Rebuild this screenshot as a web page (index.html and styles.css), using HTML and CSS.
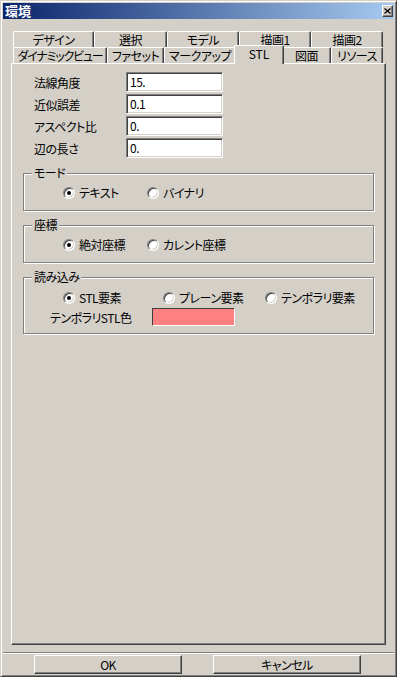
FILE: index.html
```html
<!DOCTYPE html>
<html lang="ja">
<head>
  <meta charset="UTF-8">
  <title>環境</title>
  <link rel="stylesheet" href="styles.css">
</head>
<body>
  <div class="window">
    <div class="titlebar">
      <span class="title">環境</span>
      <span class="close-btn">
        <svg width="7" height="6" viewBox="0 0 7 6"><path d="M0.5 0.5 L6.5 5.5 M6.5 0.5 L0.5 5.5" stroke="#000" stroke-width="1.3" fill="none"/></svg>
      </span>
    </div>

    <div class="dialog-body">
      <div class="tabs">
        <div class="tab-row">
          <div class="tab t-design">デザイン</div>
          <div class="tab t-select">選択</div>
          <div class="tab t-model">モデル</div>
          <div class="tab t-draw1">描画1</div>
          <div class="tab t-draw2">描画2</div>
        </div>
        <div class="tab-row">
          <div class="tab t-dynamic">ダイナミックビュー</div>
          <div class="tab t-facet">ファセット</div>
          <div class="tab t-markup">マークアップ</div>
          <div class="tab t-stl selected">STL</div>
          <div class="tab t-drawing">図面</div>
          <div class="tab t-resource">リソース</div>
        </div>
      </div>

      <div class="panel">
        <div class="fields">
          <label class="field-label">法線角度</label>
          <div class="field-input">15.</div>
          <label class="field-label">近似誤差</label>
          <div class="field-input">0.1</div>
          <label class="field-label">アスペクト比</label>
          <div class="field-input">0.</div>
          <label class="field-label">辺の長さ</label>
          <div class="field-input">0.</div>
        </div>

        <fieldset class="group group-mode">
          <legend>モード</legend>
          <div class="radio-row">
            <div class="radio r-short"><span class="radio-dot checked"></span>テキスト</div>
            <div class="radio"><span class="radio-dot"></span>バイナリ</div>
          </div>
        </fieldset>

        <fieldset class="group">
          <legend>座標</legend>
          <div class="radio-row">
            <div class="radio r-short"><span class="radio-dot checked"></span>絶対座標</div>
            <div class="radio"><span class="radio-dot"></span>カレント座標</div>
          </div>
        </fieldset>

        <fieldset class="group group-read">
          <legend>読み込み</legend>
          <div class="radio-row">
            <div class="radio r-wide"><span class="radio-dot checked"></span>STL要素</div>
            <div class="radio r-wider"><span class="radio-dot"></span>プレーン要素</div>
            <div class="radio"><span class="radio-dot"></span>テンポラリ要素</div>
          </div>
          <div class="color-row">
            <span class="color-label">テンポラリSTL色</span>
            <span class="color-box"></span>
          </div>
        </fieldset>
      </div>
    </div>

    <div class="separator"></div>

    <div class="buttons">
      <div class="btn">OK</div>
      <div class="btn">キャンセル</div>
    </div>
  </div>
</body>
</html>
```

FILE: styles.css
```css
body {
  margin: 0;
  background-color: #d4d0c8;
  font-family: "Noto Sans CJK JP", sans-serif;
  font-size: 12px;
  font-feature-settings: "palt";
  letter-spacing: -0.5px;
  color: #000;
}
.window {
  width: 397px;
  height: 677px;
  box-sizing: border-box;
  border: 1px solid;
  border-color: #d4d0c8 #404040 #404040 #d4d0c8;
  box-shadow: inset 1px 1px #fff, inset -1px -1px #808080;
  padding: 2px;
}

/* title bar */
.titlebar {
  height: 16px;
  display: flex;
  align-items: center;
  justify-content: space-between;
  padding: 0 1px 0 2px;
  background: linear-gradient(to right, #0a246a, #a6caf0);
}
.title {
  color: #fff;
  font-weight: bold;
  font-size: 13px;
  line-height: 16px;
  letter-spacing: 0;
}
.close-btn {
  width: 11px;
  height: 12px;
  box-sizing: border-box;
  display: flex;
  align-items: center;
  justify-content: center;
  background-color: #d4d0c8;
  border: 1px solid;
  border-color: #fff #404040 #404040 #fff;
  box-shadow: inset -1px -1px #808080;
}

/* tabs */
.dialog-body {
  padding: 12px 8px 0;
}
.tabs {
  padding-left: 2px;
}
.tab-row {
  display: flex;
  align-items: flex-start;
  height: 16px;
}
.tab {
  box-sizing: border-box;
  height: 16px;
  border-top: 1px solid #fff;
  border-left: 1px solid #fff;
  border-right: 1px solid #404040;
  border-radius: 2px 2px 0 0;
  box-shadow: inset -1px 0 #808080;
  background-color: #d4d0c8;
  text-align: center;
  line-height: 16px;
  white-space: nowrap;
}
.tab.selected {
  position: relative;
  z-index: 1;
  height: 19px;
  margin: -2px -2px 0;
  letter-spacing: 0;
}
.t-design { width: 81px; }
.t-select { width: 73px; }
.t-model { width: 72px; }
.t-draw1 { width: 72px; }
.t-draw2 { width: 72px; }
.t-dynamic { width: 94px; letter-spacing: -1.2px; }
.t-facet { width: 57px; }
.t-markup { width: 72px; }
.t-stl { width: 50px; }
.t-drawing { width: 49px; }
.t-resource { width: 52px; }

/* panel */
.panel {
  height: 582px;
  box-sizing: border-box;
  border: 1px solid;
  border-color: #fff #404040 #404040 #fff;
  box-shadow: inset -1px -1px #808080;
  padding-top: 8px;
}
.fields {
  display: grid;
  grid-template-columns: 92px 97px;
  row-gap: 2px;
  align-items: center;
  padding-left: 22px;
}
.field-input {
  height: 20px;
  box-sizing: border-box;
  background-color: #fff;
  border: 1px solid;
  border-color: #808080 #fff #fff #808080;
  box-shadow: inset 1px 1px #404040, inset -1px -1px #d4d0c8;
  padding-left: 3px;
  line-height: 18px;
}

/* group boxes */
.group {
  margin: 7px 11px 0;
  padding: 6px 0 10px;
  min-inline-size: 0;
  border: 1px solid #808080;
  box-shadow: 1px 1px #fff, inset 1px 1px #fff;
}
.group-mode {
  margin-top: 8px;
}
.group-read {
  padding-top: 7px;
  padding-bottom: 7px;
}
.group legend {
  margin-left: 8px;
  padding: 0 2px;
  line-height: 14px;
  background-color: #d4d0c8;
}
.radio-row {
  display: flex;
  height: 14px;
  line-height: 14px;
  padding-left: 39px;
}
.radio {
  display: flex;
  align-items: center;
  gap: 4px;
  white-space: nowrap;
}
.r-short { width: 84px; }
.r-wide { width: 100px; }
.r-wider { width: 102px; }
.radio-dot {
  width: 12px;
  height: 12px;
  box-sizing: border-box;
  display: flex;
  align-items: center;
  justify-content: center;
  border-radius: 50%;
  border: 1px solid;
  border-color: #808080 #fff #fff #808080;
  box-shadow: inset 1px 1px #404040, inset -1px -1px #d4d0c8;
  background-color: #fff;
}
.radio-dot.checked::after {
  content: "";
  width: 4px;
  height: 4px;
  border-radius: 50%;
  background-color: #000;
}
.color-row {
  display: flex;
  align-items: center;
  margin-top: 3px;
  padding-left: 26px;
}
.color-label {
  width: 102px;
  white-space: nowrap;
}
.color-box {
  width: 83px;
  height: 18px;
  box-sizing: border-box;
  border: 1px solid;
  border-color: #404040 #fff #fff #404040;
  background-color: #ff8080;
}

/* bottom buttons */
.separator {
  margin-top: 7px;
  border-top: 1px solid #808080;
  border-bottom: 1px solid #fff;
}
.buttons {
  display: flex;
  gap: 31px;
  margin-top: 1px;
  padding-left: 31px;
}
.btn {
  width: 148px;
  height: 19px;
  box-sizing: border-box;
  border: 1px solid;
  border-color: #fff #404040 #404040 #fff;
  box-shadow: inset -1px -1px #808080;
  text-align: center;
  line-height: 17px;
}
```
